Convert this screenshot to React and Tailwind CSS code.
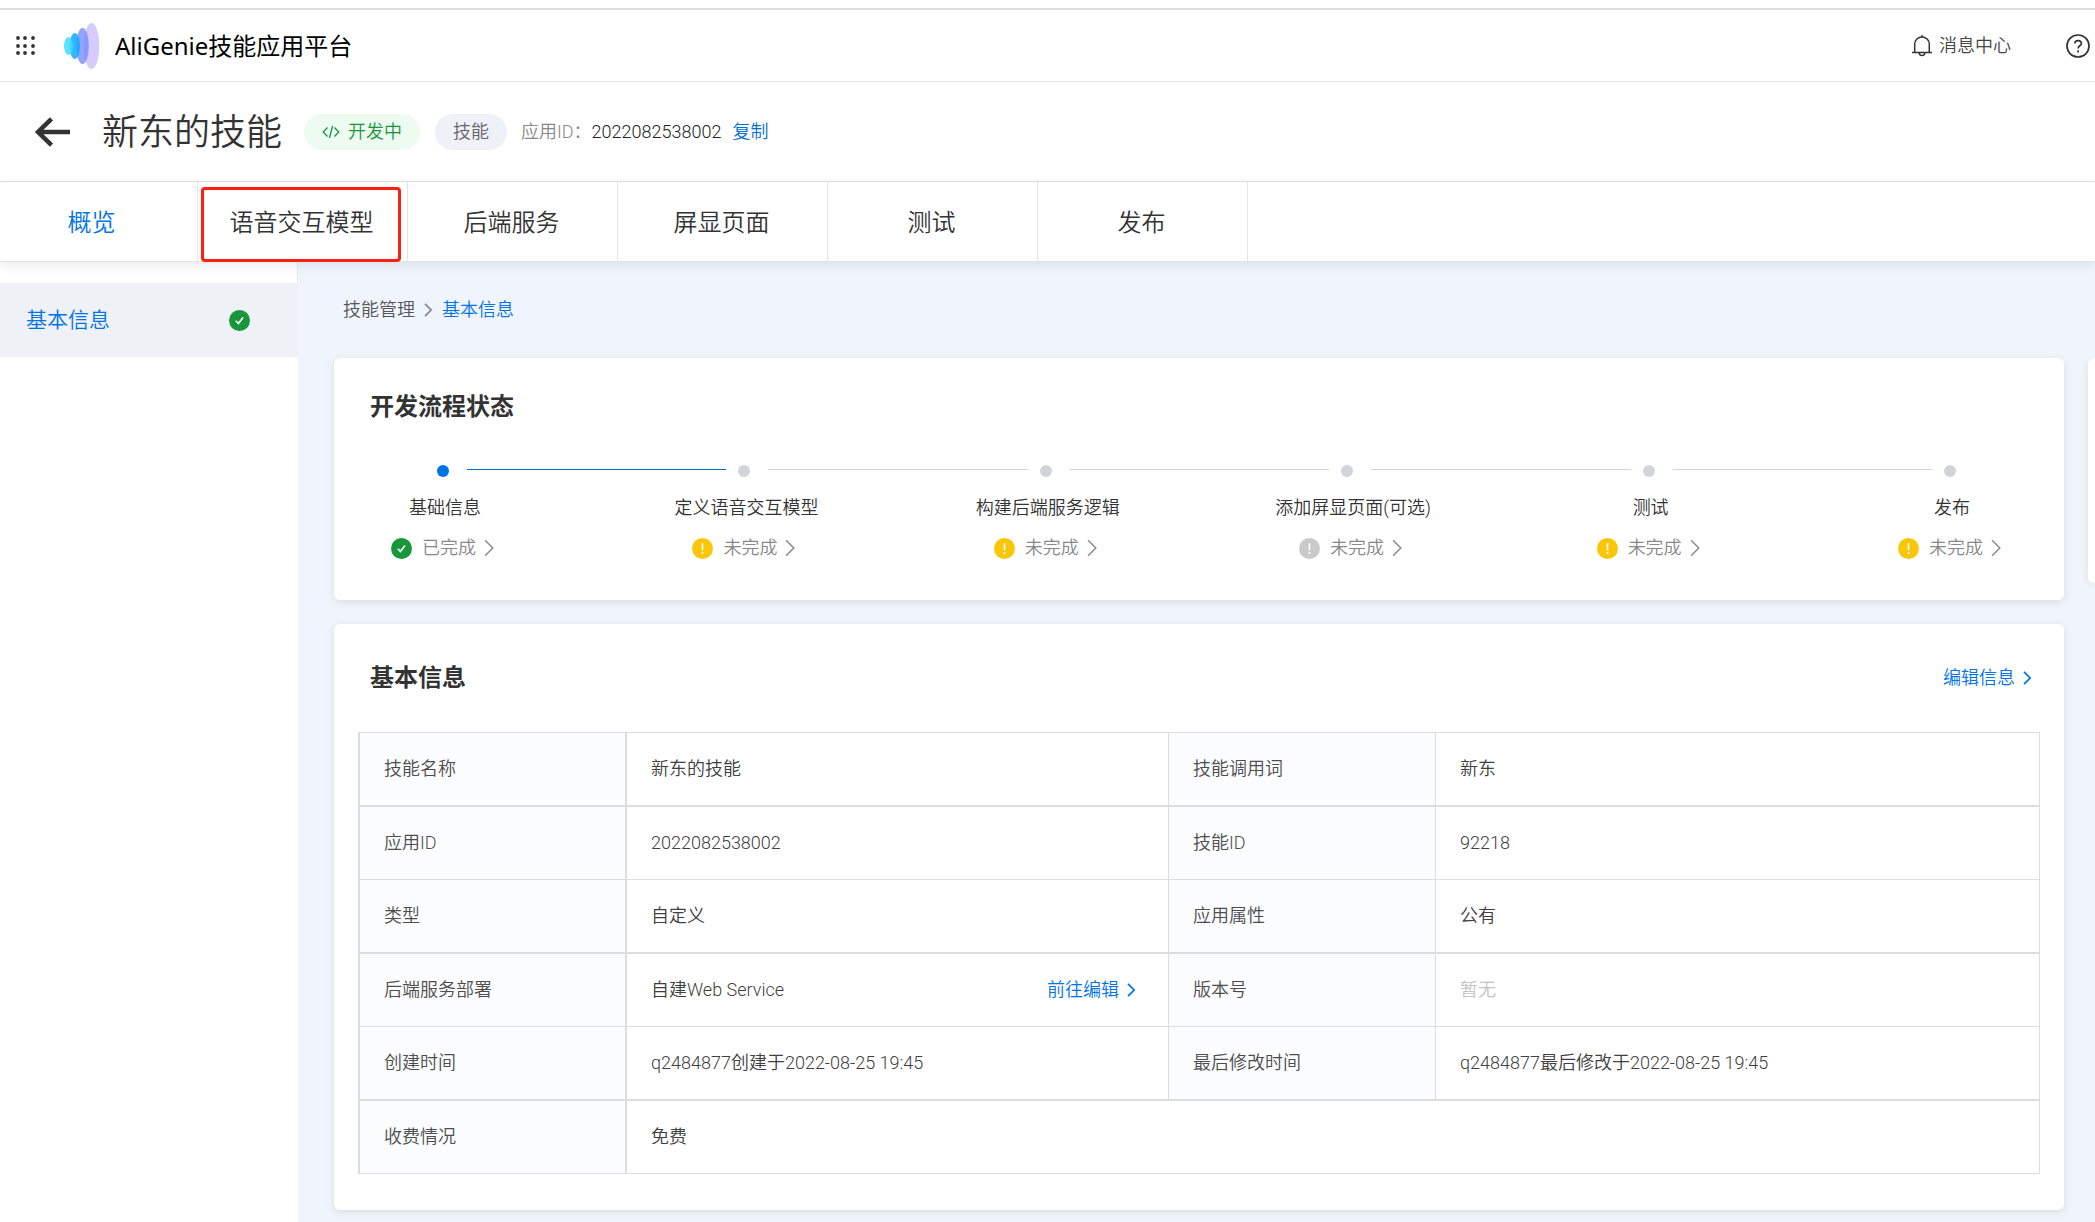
import React, { useState } from "react";
import clsx from "clsx";

// 顶部导航
const TABS = ["概览", "语音交互模型", "后端服务", "屏显页面", "测试", "发布"];

// 开发流程步骤
const STEPS = [
  { name: "基础信息", status: "done" },
  { name: "定义语音交互模型", status: "todo" },
  { name: "构建后端服务逻辑", status: "todo" },
  { name: "添加屏显页面(可选)", status: "optional" },
  { name: "测试", status: "todo" },
  { name: "发布", status: "todo" },
];

// 基本信息表格，每行两组 [名称, 值]
const INFO_ROWS = [
  [["技能名称", "新东的技能"], ["技能调用词", "新东"]],
  [["应用ID", "2022082538002"], ["技能ID", "92218"]],
  [["类型", "自定义"], ["应用属性", "公有"]],
  [["后端服务部署", "自建Web Service"], ["版本号", ""]],
  [["创建时间", "q2484877创建于2022-08-25 19:45"], ["最后修改时间", "q2484877最后修改于2022-08-25 19:45"]],
  [["收费情况", "免费"]],
];

const statusFill = (status) => {
  switch (status) {
    case "done":
      return "#18963c";
    case "todo":
      return "#fac60a";
    default:
      return "#cacaca";
  }
};

function StatusIcon({ status }) {
  return (
    <svg viewBox="0 0 21 21" className="w-[21px] h-[21px] shrink-0">
      <circle cx="10.5" cy="10.5" r="10.5" fill={statusFill(status)} />
      {status === "done" ? (
        <path d="M6.8 10.8l2.6 2.8 4.6-6.2" fill="none" stroke="#fff" strokeWidth="1.6" />
      ) : (
        <path d="M10.5 5.2v7.2M10.5 14v2" fill="none" stroke="#fff" strokeWidth="1.6" />
      )}
    </svg>
  );
}

function Chevron({ className, strokeWidth = 2 }) {
  return (
    <svg viewBox="0 0 10 16" fill="none" stroke="currentColor" strokeWidth={strokeWidth} className={className}>
      <path d="M1 1l7 7-7 7" />
    </svg>
  );
}

function Logo() {
  return (
    <svg viewBox="0 0 36 48" className="w-9 h-12">
      <ellipse cx="27.5" cy="24" rx="7.8" ry="23" fill="#d5ccfd" />
      <ellipse cx="18.5" cy="24" rx="6.3" ry="18" fill="#6f86ff" fillOpacity="0.75" />
      <ellipse cx="10.8" cy="24" rx="5.2" ry="13" fill="#12a8ff" fillOpacity="0.85" />
      <ellipse cx="4.5" cy="24" rx="4.5" ry="9" fill="#3fdcff" fillOpacity="0.85" />
    </svg>
  );
}

function Header() {
  return (
    <header className="flex h-[72px] items-center border-b border-[#e8e8e8] pl-4 pr-[5px]">
      <button type="button" aria-label="全部应用">
        <svg viewBox="0 0 20 20" className="w-5 h-5" fill="#333">
          {[2, 10, 17].map((y) => [2, 9, 17].map((x) => <circle key={`${x}-${y}`} cx={x} cy={y} r="1.9" />))}
        </svg>
      </button>
      <div className="ml-7 flex items-center">
        <Logo />
        <span className="ml-[15px] font-['Noto_Sans','Noto_Sans_CJK_SC',sans-serif] text-2xl font-normal text-black">
          AliGenie技能应用平台
        </span>
      </div>
      <button type="button" className="ml-auto flex items-center gap-[7px] text-[#444]">
        <svg viewBox="0 0 20 22" fill="none" stroke="#333" strokeWidth="1.5" className="w-5 h-[22px]">
          <path d="M0 17.5h20M2.7 17.5V9.2a7.3 7.3 0 0 1 14.6 0v8.3M10 0v2M7.2 18c.3 3.4 5.3 3.4 5.6 0" />
        </svg>
        消息中心
      </button>
      <button type="button" aria-label="帮助" className="ml-[55px]">
        <svg viewBox="0 0 24 24" fill="none" stroke="#333" strokeWidth="1.7" className="w-6 h-6">
          <circle cx="12" cy="12" r="11" />
          <path d="M8.8 9.6c0-4 6.6-4 6.6-.2 0 2.4-3.3 2.4-3.3 5M12.1 16.2v2.2" />
        </svg>
      </button>
    </header>
  );
}

function TitleBar() {
  return (
    <div className="flex h-[100px] items-center border-b border-[#e0e0e0] pl-[34px]">
      <button type="button" aria-label="返回">
        <svg viewBox="0 0 36 30" fill="none" stroke="#333" strokeWidth="4.5" className="w-9 h-[30px]">
          <path d="M36 15H4M17.5 1.8L4 15l13.5 13.2" />
        </svg>
      </button>
      <h1 className="ml-8 pt-0.5 text-4xl font-[350] text-[#333]">新东的技能</h1>
      <span className="ml-[22px] flex h-9 items-center gap-2 rounded-full bg-[#eefbf1] px-[18px] text-[#18963c]">
        <svg viewBox="0 0 18 14" fill="none" stroke="currentColor" strokeWidth="1.3" className="w-[18px] h-[14px]">
          <path d="M5.5 2.5L1.2 7l4.3 4.5M12.5 2.5L16.8 7l-4.3 4.5M10.6 1L7.4 13" />
        </svg>
        开发中
      </span>
      <span className="ml-[15px] flex h-9 items-center rounded-full bg-[#eef1f7] px-[18px] text-[#666]">技能</span>
      <span className="ml-[14px] text-[#888]">应用ID：</span>
      <span className="text-[#222]">2022082538002</span>
      <button type="button" className="ml-[11px] text-[#0070cc]">复制</button>
    </div>
  );
}

function TabBar({ active, onChange }) {
  return (
    <nav className="relative z-10 flex h-20 border-b border-[#e0e3e6] bg-white shadow-[0_4px_12px_rgba(0,0,0,0.08)]">
      {TABS.map((tab, i) => (
        <button
          key={tab}
          type="button"
          onClick={() => onChange(tab)}
          className={clsx(
            "relative shrink-0 border-r border-[#e5e5e5] pt-[3px] text-2xl",
            i === 0 ? "w-[198px] pr-[14px]" : "w-[210px] pr-0.5",
            active === tab ? "text-[#0073e6]" : "text-[#333]"
          )}
        >
          {tab}
          {/* 红框标注 */}
          {i === 1 && <span className="absolute left-[3px] top-[5px] h-[75px] w-[200px] rounded-[4px] border-3 border-[#ff2012]" />}
        </button>
      ))}
    </nav>
  );
}

function Steps() {
  return (
    <ol className="mt-[43px] flex pl-[37px] pr-[38px]">
      {STEPS.map((step, i) => {
        const last = i === STEPS.length - 1;
        return (
          <li key={step.name} className={last ? "w-[148px] shrink-0" : "w-0 grow"}>
            <div className="flex h-3 items-center">
              <span
                className={clsx("ml-[66px] h-3 w-3 shrink-0 rounded-full", i === 0 ? "bg-[#0073e6]" : "bg-[#d1d5da]")}
              />
              {!last && (
                <span
                  className={clsx("-mr-[54px] mb-[3px] ml-[18px] h-px grow", i === 0 ? "bg-[#0070cc]" : "bg-[#d1d3d6]")}
                />
              )}
            </div>
            <div className="mt-[11px] flex w-max min-w-[148px] flex-col items-center">
              <span className="leading-10 text-[#333]">{step.name}</span>
              <a href="#" className="mr-1 flex h-10 items-center text-[#888]">
                <StatusIcon status={step.status} />
                <span className="ml-[10px] mr-2">{step.status === "done" ? "已完成" : "未完成"}</span>
                <Chevron className="h-[18px] w-[11px]" strokeWidth={1.3} />
              </a>
            </div>
          </li>
        );
      })}
    </ol>
  );
}

function MoreLink({ children }) {
  return (
    <a href="#" className="flex items-center gap-2 text-[#0073e6]">
      {children}
      <Chevron className="h-[14px] w-[9px]" />
    </a>
  );
}

function InfoTable() {
  return (
    <table className="w-full table-fixed border-separate border-spacing-0 border-t border-l-2 border-[#ddd] text-left">
      <colgroup>
        <col className="w-[267px]" />
        <col className="w-[542px]" />
        <col className="w-[267px]" />
        <col />
      </colgroup>
      <tbody>
        {INFO_ROWS.map((row, i) => {
          const bottom = i % 2 === 0 ? "border-b-2" : "border-b";
          return (
            <tr key={row[0][0]}>
              {row.map(([label, value], j) => (
                <React.Fragment key={label}>
                  <th
                    className={clsx(
                      "bg-[#fbfcfe] border-[#ddd] px-6 py-0 font-[350] text-[#4d4d4d]",
                      bottom,
                      j === 0 ? "border-r-2" : "border-r"
                    )}
                  >
                    {label}
                  </th>
                  <td
                    colSpan={row.length === 1 ? 3 : 1}
                    className={clsx("border-r border-[#ddd] px-6 py-0 text-[#404040]", bottom)}
                  >
                    <div className="flex h-[72px] items-center justify-between pr-2">
                      {value || <span className="text-[#c4c4c4]">暂无</span>}
                      {label === "后端服务部署" && <MoreLink>前往编辑</MoreLink>}
                    </div>
                  </td>
                </React.Fragment>
              ))}
            </tr>
          );
        })}
      </tbody>
    </table>
  );
}

export default function App() {
  const [active, setActive] = useState("概览");

  return (
    <div className="flex min-h-screen flex-col overflow-hidden bg-white pt-2 font-[Roboto,'Noto_Sans_CJK_SC',sans-serif] text-lg font-[350]">
      <div className="h-0.5 bg-[#ddd]" />
      <Header />
      <TitleBar />
      <TabBar active={active} onChange={setActive} />

      <div className="flex grow">
        {/* 侧边栏 */}
        <aside className="w-[298px] shrink-0">
          <div className="h-[21px] border-r border-[#e5e5e5]" />
          <a href="#" className="flex h-[74px] items-center justify-between bg-[#eef1f6] pl-[26px] pr-12 text-[21px] text-[#0073e6]">
            基本信息
            <StatusIcon status="done" />
          </a>
        </aside>

        <main className="min-w-0 grow bg-[#f0f5fd] pb-3 pl-9">
          {/* 面包屑 */}
          <div className="flex h-24 items-center gap-[9px] pl-[9px] text-[#555]">
            <a href="#">技能管理</a>
            <Chevron className="h-[14px] w-[9px] text-[#888]" />
            <a href="#" className="text-[#0073e6]">基本信息</a>
          </div>

          <div className="flex items-start gap-6">
            <div className="flex min-w-0 grow flex-col gap-6">
              <section className="h-[242px] rounded-md bg-white pt-[34px] shadow-[0_2px_8px_rgba(0,0,0,0.1)]">
                <h2 className="pl-9 text-2xl leading-[30px] font-bold text-[#333]">开发流程状态</h2>
                <Steps />
              </section>

              <section className="rounded-md bg-white px-6 pt-[34px] pb-9 shadow-[0_2px_8px_rgba(0,0,0,0.1)]">
                <div className="mb-[34px] flex h-10 items-center justify-between pl-3 pr-2">
                  <h2 className="text-2xl font-bold text-[#333]">基本信息</h2>
                  <MoreLink>编辑信息</MoreLink>
                </div>
                <InfoTable />
              </section>
            </div>
            <aside className="h-[225px] w-[7px] shrink-0 rounded-l-md bg-white shadow-[0_2px_8px_rgba(0,0,0,0.1)]" />
          </div>
        </main>
      </div>
    </div>
  );
}
